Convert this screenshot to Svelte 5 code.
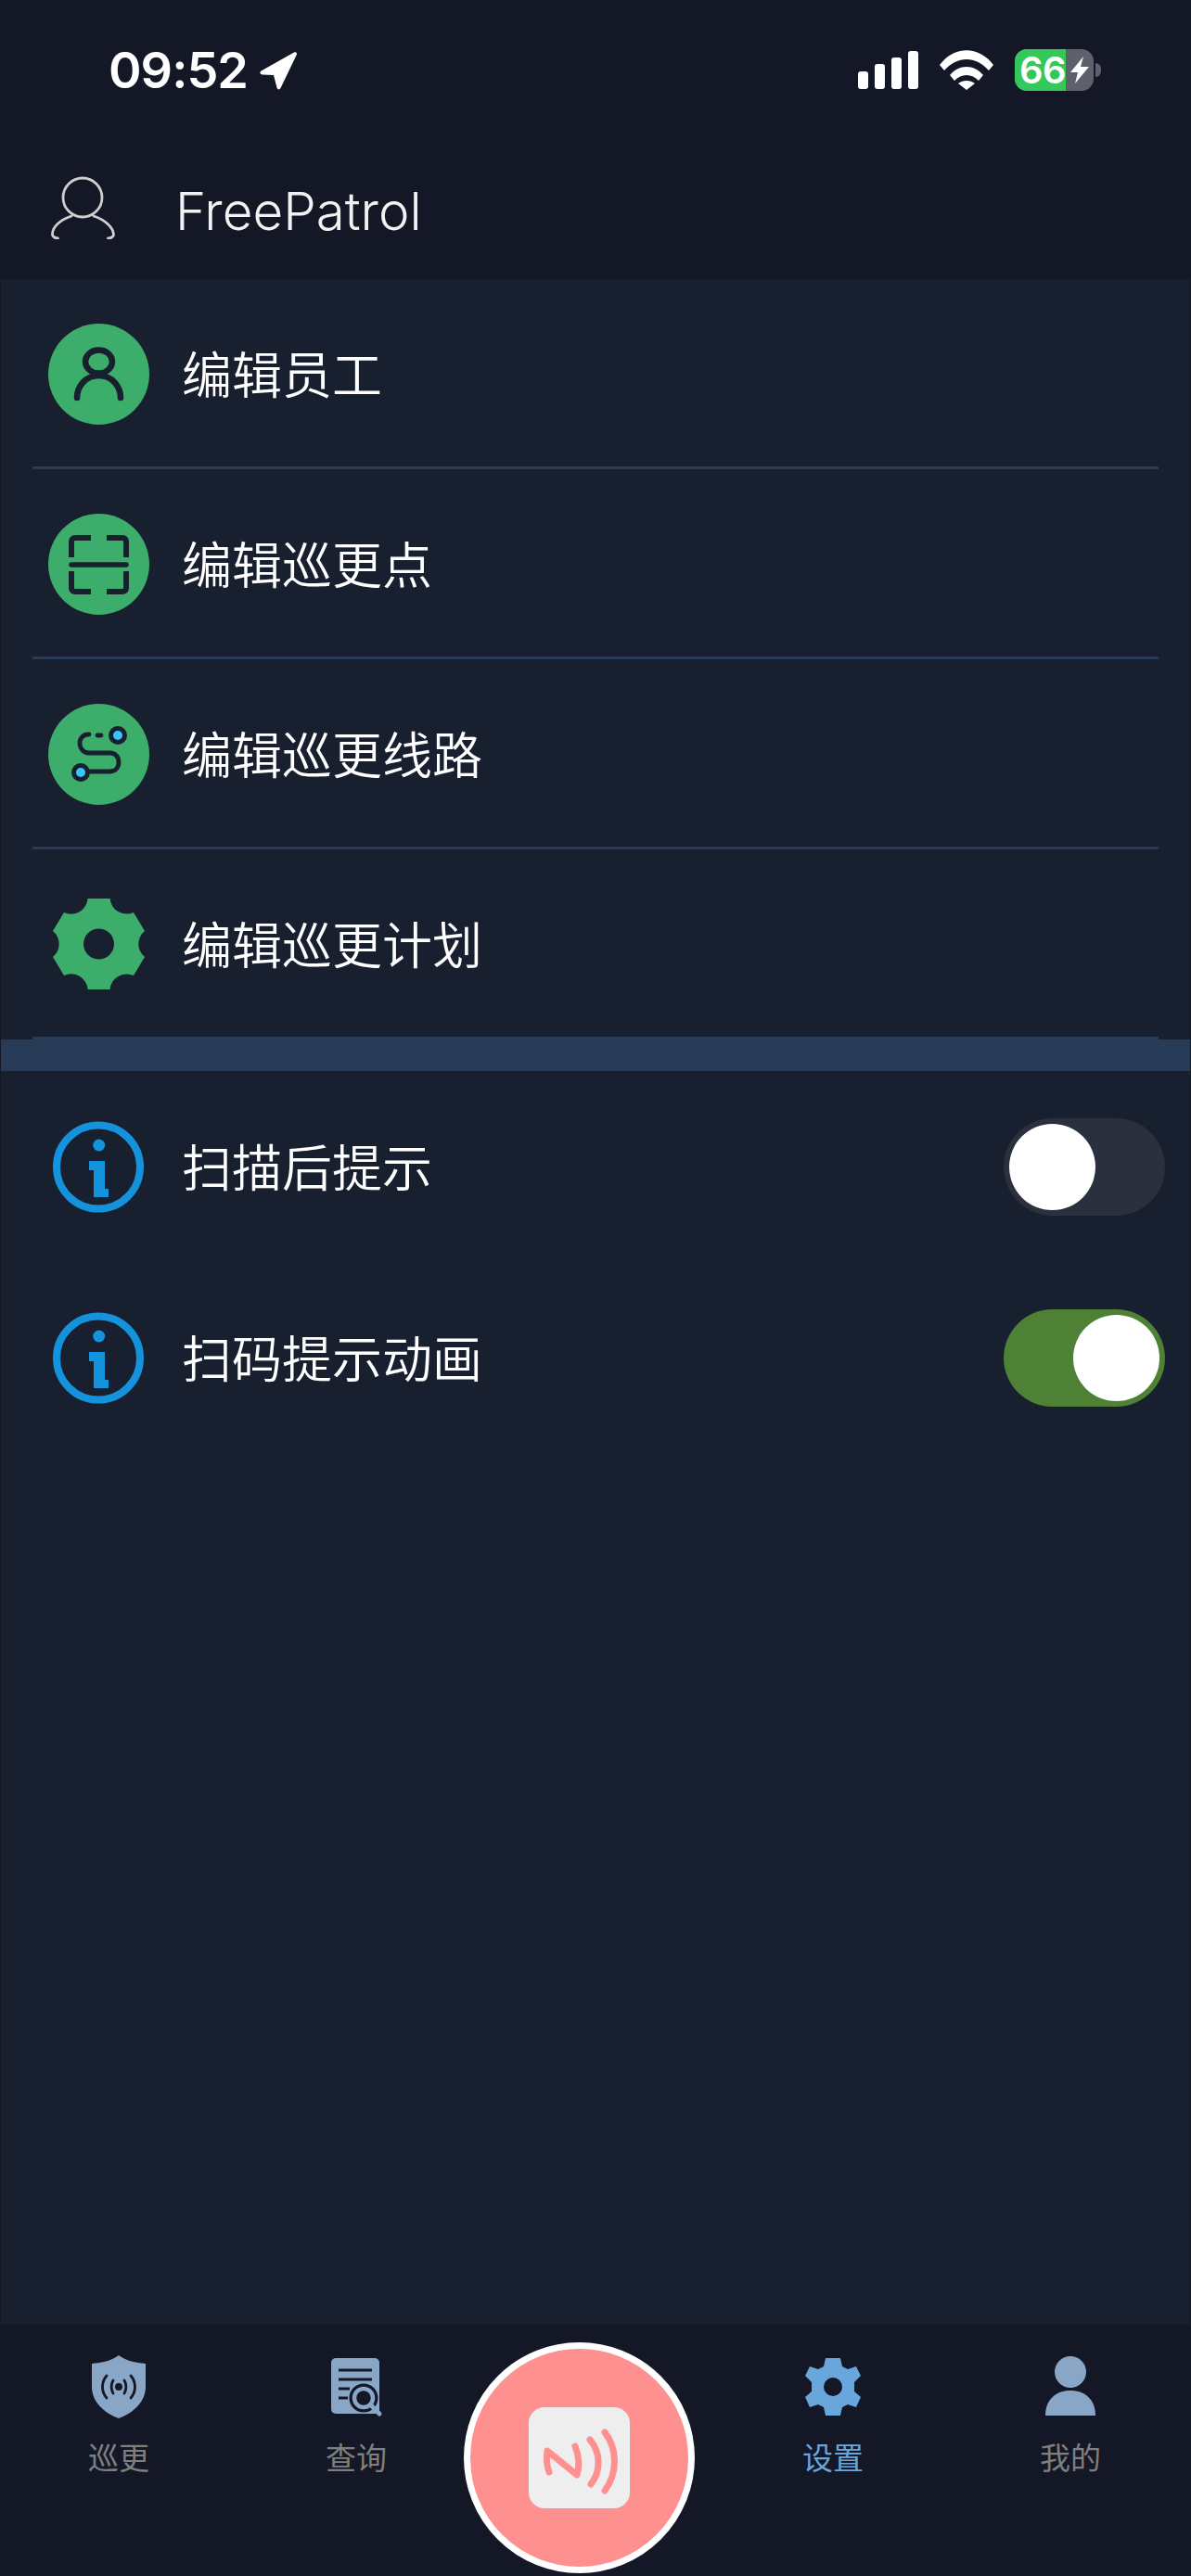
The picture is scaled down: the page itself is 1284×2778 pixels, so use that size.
<script lang="ts">
	const editItems = [
		{ label: '编辑员工', icon: 'person' },
		{ label: '编辑巡更点', icon: 'scan' },
		{ label: '编辑巡更线路', icon: 'route' },
		{ label: '编辑巡更计划', icon: 'gear' }
	];

	let toggles = $state([
		{ label: '扫描后提示', on: false },
		{ label: '扫码提示动画', on: true }
	]);
</script>

<div class="page">
	<div class="status-bar">
		<div class="time">
			<span>09:52</span>
			<svg class="arrow" viewBox="0 0 42 42"><path d="M2.5 21.5 38 1.5c2-1 3.6.6 2.8 2.6L23.500 40c-1 2-3.500 1.800-4-.4L16 26 4 25.500c-2.500-.2-3.400-2.700-1.500-4z" fill="#fff"/></svg>
		</div>
		<div class="status-right">
			<svg class="signal" viewBox="0 0 65 41"><rect x="0" y="22" width="11" height="19" rx="3"/><rect x="18" y="14" width="11" height="27" rx="3"/><rect x="36" y="7" width="11" height="34" rx="3"/><rect x="54" y="0" width="11" height="41" rx="3"/></svg>
			<svg class="wifi" viewBox="0 0 58 43"><path d="M0 16C16-5 42-5 58 16l-5 6C39 6 19 6 5 22z"/><path d="M11 27c10-12 26-12 36 0l-5 6c-7-8-19-8-26 0z"/><path d="M20 36c5-4 13-4 18 0l-9 7z"/></svg>
			<div class="battery">
				<div class="battery-fill"><span class="battery-level">66</span></div>
				<svg class="bolt" viewBox="0 0 20 29"><path d="M14 0 0 17h8L5 29 20 11h-9z" fill="#fff"/></svg>
			</div>
			<div class="battery-cap"></div>
		</div>
	</div>

	<header class="app-header">
		<svg class="header-icon" viewBox="0 0 69 68" fill="none" stroke="#cfcfcf" stroke-width="2.800" stroke-linecap="round">
			<circle cx="34" cy="23" r="21"/>
			<path d="M22 43C10 47 1 55 1.500 63c0 2 3 4 6 4M46 43C58 47 67 55 67.500 63c0 2-3 4-6 4"/>
		</svg>
		<span class="header-title">FreePatrol</span>
	</header>

	<main class="content">
		<section class="edit-list">
			{#each editItems as item (item.label)}
				<div class="row edit-row">
					<div class="row-icon">
						{#if item.icon === 'person'}
							<svg viewBox="0 0 109 109"><circle cx="54.500" cy="54.500" r="54.500" fill="#3cad6b"/><ellipse cx="54.500" cy="41" rx="14.500" ry="12.500" fill="none" stroke="#181f2e" stroke-width="6.500"/><path d="M31 80c0-12 9-24 23.500-24S78 68 78 80" fill="none" stroke="#181f2e" stroke-width="6.500" stroke-linecap="round"/></svg>
						{:else if item.icon === 'scan'}
							<svg viewBox="0 0 109 109"><circle cx="54.500" cy="54.500" r="54.500" fill="#3cad6b"/><path d="M46 26H29c-2.500 0-4 1.500-4 4v17M63 26h17c2.500 0 4 1.500 4 4v17M25 62v18c0 2.500 1.500 4 4 4h17M84 62v18c0 2.500-1.500 4-4 4H63" fill="none" stroke="#181f2e" stroke-width="6"/><path d="M25 55h59" stroke="#181f2e" stroke-width="5.500" stroke-linecap="round"/></svg>
						{:else if item.icon === 'route'}
							<svg viewBox="0 0 109 109"><circle cx="54.500" cy="54.500" r="54.500" fill="#3cad6b"/><path d="M44 33h-1c-5 0-9 4-9 9.500s4 10.500 10 10.500h23c5 0 9 4 9 10s-4 10-10 10H45" fill="none" stroke="#181f2e" stroke-width="4.800" stroke-linecap="round"/><path d="M53 34h4" stroke="#181f2e" stroke-width="4.800" stroke-linecap="round"/><circle cx="75" cy="34" r="7.500" fill="#3ac5fa" stroke="#181f2e" stroke-width="5"/><circle cx="35" cy="74" r="7.500" fill="#3ac5fa" stroke="#181f2e" stroke-width="5"/></svg>
						{:else}
							<svg viewBox="0 0 109 109"><path fill-rule="evenodd" d="M42.600 5H66.600A18 18 0 0 0 92 20L104 40A18 18 0 0 0 104 68L92 88A18 18 0 0 0 66.600 103H42.600A18 18 0 0 0 17 88L5 68A18 18 0 0 0 5 40L17 20A18 18 0 0 0 42.600 5ZM54.500 37.500a16.500 16.500 0 1 0 0 33a16.500 16.500 0 1 0 0-33Z" fill="#3cad6b"/></svg>
						{/if}
					</div>
					<span class="row-label">{item.label}</span>
				</div>
			{/each}
		</section>

		<div class="band"></div>

		<section class="toggle-list">
			{#each toggles as t, i (t.label)}
				<div class="row toggle-row">
					<div class="row-icon">
						<svg viewBox="0 0 109 109">
							<circle cx="54" cy="54.500" r="45" fill="none" stroke="#1492dc" stroke-width="8"/>
							<circle cx="54.700" cy="31" r="6.500" fill="#1492dc"/>
							<path d="M44 48H61V78H65V87H49V58H44Z" fill="#1492dc"/>
						</svg>
					</div>
					<span class="row-label">{t.label}</span>
					<button class="switch" class:on={t.on} aria-label={t.label} onclick={() => (toggles[i].on = !toggles[i].on)}>
						<span class="knob"></span>
					</button>
				</div>
			{/each}
		</section>
	</main>

	<nav class="tab-bar">
		<div class="tab">
			<svg viewBox="0 0 60 70"><path d="M30 1c8 6 18 8 29 9v25c0 16-13 28-29 34C14 63 1 51 1 35V10c11-1 21-3 29-9z" fill="#8aa6c6"/><circle cx="30" cy="35" r="4" fill="#131726"/><path d="M24 28c-2.500 4-2.500 10 0 14M36 28c2.500 4 2.500 10 0 14M17 23c-6 7-6 17 0 24M43 23c6 7 6 17 0 24" fill="none" stroke="#131726" stroke-width="2.800" stroke-linecap="round"/></svg>
			<span>巡更</span>
		</div>
		<div class="tab">
			<svg viewBox="0 0 60 64">
				<rect x="3" y="1" width="52" height="60" rx="5" fill="#8aa6c6"/>
				<path d="M11 14h36M11 24h36M11 34h12M11 44h10" stroke="#131726" stroke-width="3"/>
				<circle cx="38" cy="44" r="15.500" fill="#131726"/>
				<circle cx="38" cy="44" r="10" fill="#131726" stroke="#8aa6c6" stroke-width="4.500"/>
				<path d="M46 52l9 9" stroke="#8aa6c6" stroke-width="5" stroke-linecap="round"/>
			</svg>
			<span>查询</span>
		</div>
		<div class="tab-center-slot"></div>
		<div class="tab active">
			<svg viewBox="0 0 60 62"><path d="M22 0h16l2 9 6 3 9-3 5 10-1 1-6 6v10l7 6-5 11-9-3-6 3-2 9H22l-2-9-6-3-9 3-5-11 7-6V26L0 19 5 9l9 3 6-3z" fill="#69a6dc"/><circle cx="30" cy="31" r="10" fill="#131726"/></svg>
			<span>设置</span>
		</div>
		<div class="tab">
			<svg viewBox="0 0 60 66"><circle cx="30" cy="17" r="17" fill="#8aa6c6"/><path d="M3 64C3 47 14 37 30 37s27 10 27 27z" fill="#8aa6c6"/></svg>
			<span>我的</span>
		</div>
		<button class="nfc" aria-label="NFC">
			<span class="nfc-inner">
				<svg viewBox="0 0 109 109" fill="none" stroke="#ff9090" stroke-width="7" stroke-linecap="round" stroke-linejoin="round">
					<path d="M22 70c-3-8-3-16-2-23L52 73c3-10 2-21-2-31"/>
					<path d="M66 35c12 14 12 34 1 48"/>
					<path d="M82 27c14 18 14 44 0 63"/>
				</svg>
			</span>
		</button>
	</nav>
</div>

<style>
	:global(body) {
		margin: 0;
		background: #181f2e;
	}

	.page {
		position: relative;
		width: 1284px;
		height: 2778px;
		display: flex;
		flex-direction: column;
		background: #181f2e;
		font-family: 'Noto Sans CJK SC', 'Noto Sans', sans-serif;
		color: #fff;
		overflow: hidden;
	}

	.status-bar {
		height: 134px;
		flex: none;
		display: flex;
		justify-content: space-between;
		align-items: flex-start;
		padding: 50px 0 0 117px;
		box-sizing: border-box;
		background: #131726;
	}

	.time {
		display: flex;
		align-items: center;
		gap: 12px;
		font-family: Inter, 'Liberation Sans', sans-serif;
		font-size: 54px;
		font-weight: 600;
		line-height: 52px;
		letter-spacing: -1px;
	}

	.arrow {
		width: 42px;
		height: 42px;
	}

	.status-right {
		display: flex;
		align-items: center;
		margin-right: 97px;
		margin-top: 3px;
	}

	.signal {
		width: 65px;
		height: 41px;
		fill: #fff;
	}

	.wifi {
		width: 58px;
		height: 43px;
		margin-left: 23px;
		fill: #fff;
	}

	.battery {
		display: flex;
		width: 85px;
		height: 45px;
		margin-left: 23px;
		border-radius: 13px;
		background: #5e606b;
	}

	.battery-fill {
		flex: none;
		width: 55px;
		border-radius: 13px 0 0 13px;
		background: #34c759;
		padding-left: 5px;
		box-sizing: border-box;
		white-space: nowrap;
	}

	.battery-level {
		display: block;
		font-family: Inter, 'Liberation Sans', sans-serif;
		font-size: 40px;
		font-weight: 600;
		line-height: 45px;
		letter-spacing: -0.5px;
	}

	.bolt {
		flex: none;
		width: 20px;
		height: 29px;
		margin: 8px 0 0 5px;
	}

	.battery-cap {
		width: 6px;
		height: 15px;
		margin-left: 2px;
		border-radius: 0 8px 8px 0;
		background: #5e606b;
	}

	.app-header {
		height: 167px;
		flex: none;
		display: flex;
		align-items: center;
		padding: 13px 0 0 55px;
		box-sizing: border-box;
		background: #131726;
	}

	.header-icon {
		width: 69px;
		height: 68px;
	}

	.header-title {
		margin: 6px 0 0 65px;
		font-family: Inter, 'Liberation Sans', sans-serif;
		font-size: 56.500px;
		font-weight: 350;
		color: #f2f2f2;
	}

	.content {
		flex: 1;
		border-left: 1px solid #131726;
		border-right: 1px solid #131726;
	}

	.row {
		display: flex;
		align-items: center;
		box-sizing: border-box;
		height: 206px;
	}

	.edit-row {
		height: 205px;
		margin-left: 34px;
		margin-right: 34px;
		padding-left: 17px;
		padding-top: 3px;
		border-bottom: 3px solid #283c58;
	}

	.toggle-row {
		padding-left: 51px;
		padding-right: 27px;
	}

	.row-icon {
		width: 109px;
		height: 109px;
		flex: none;
	}

	.row-icon svg {
		width: 109px;
		height: 109px;
		display: block;
	}

	.row-label {
		margin: 0 0 3px 35px;
		font-size: 54px;
		font-weight: 350;
		line-height: 1;
	}

	.band {
		height: 34px;
		background: #283c58;
	}

	.switch {
		margin-left: auto;
		width: 174px;
		height: 105px;
		padding: 0;
		border: none;
		border-radius: 53px;
		background: #2a303e;
		position: relative;
	}

	.switch.on {
		background: #4e8136;
	}

	.knob {
		position: absolute;
		top: 6px;
		left: 6px;
		width: 93px;
		height: 93px;
		border-radius: 50%;
		background: #fff;
	}

	.switch.on .knob {
		left: 75px;
	}

	.tab-bar {
		position: relative;
		height: 271px;
		flex: none;
		display: flex;
		align-items: flex-start;
		padding: 0 2px 0 0;
		box-sizing: border-box;
		background: #131726;
	}

	.tab {
		width: 256px;
		display: flex;
		flex-direction: column;
		align-items: center;
		padding-top: 32px;
		font-size: 33px;
		font-weight: 400;
		color: #7f7f7f;
	}

	.tab svg {
		width: 60px;
		height: 70px;
		display: block;
	}

	.tab span {
		margin-top: 20px;
		line-height: 40px;
	}

	.tab.active {
		color: #69a6dc;
	}

	.tab-center-slot {
		flex: 1;
	}

	.nfc {
		position: absolute;
		left: 500px;
		top: 19px;
		width: 249px;
		height: 249px;
		box-sizing: border-box;
		padding: 0;
		border: 7px solid #fff;
		border-radius: 50%;
		background: #ff9090;
		display: flex;
		align-items: center;
		justify-content: center;
	}

	.nfc-inner {
		width: 109px;
		height: 109px;
		border-radius: 17px;
		background: #eeeeee;
		display: block;
	}

	.nfc-inner svg {
		width: 109px;
		height: 109px;
		display: block;
	}
</style>
